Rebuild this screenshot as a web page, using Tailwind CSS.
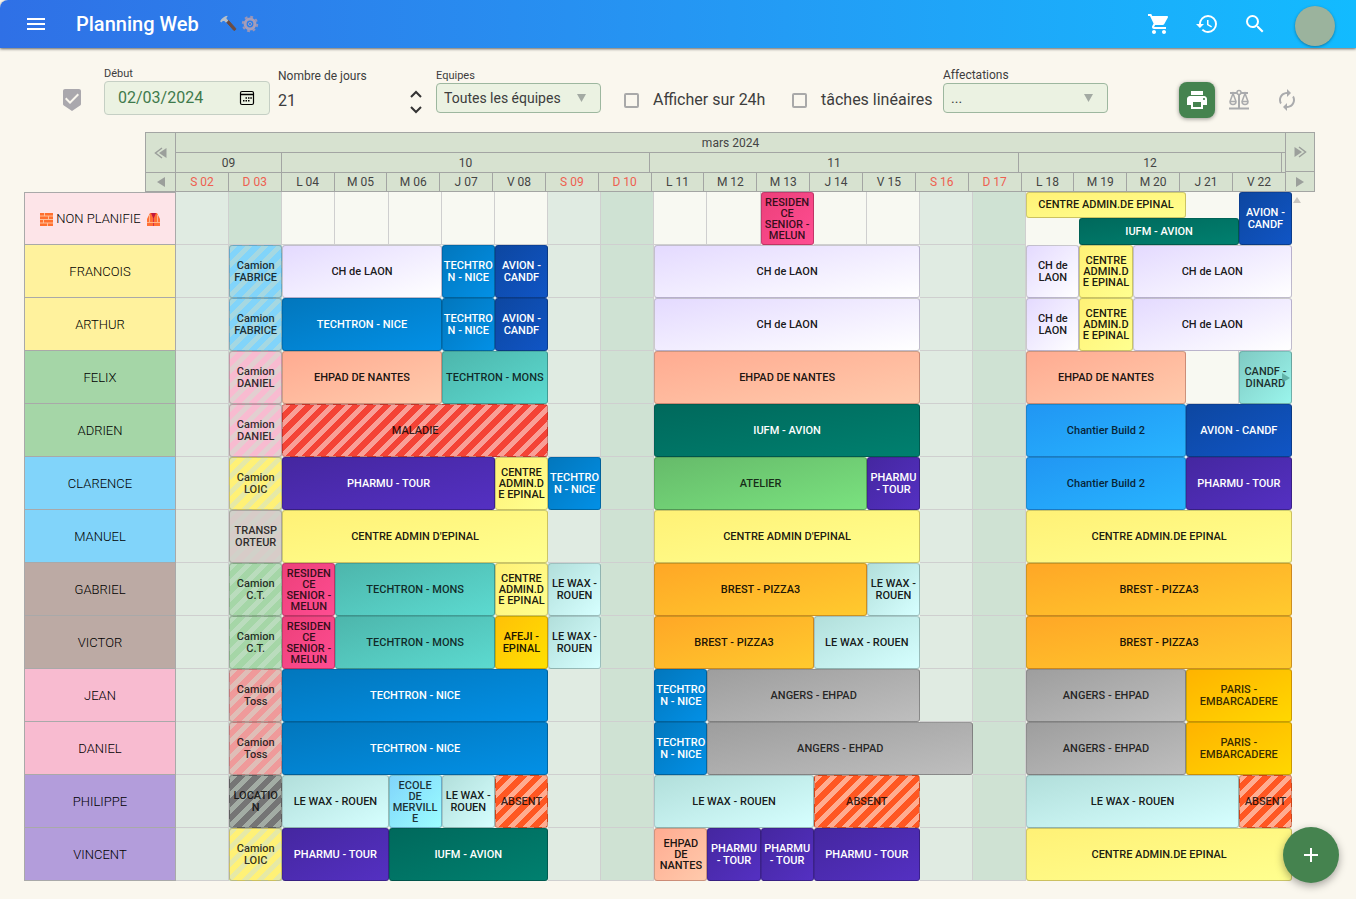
<!DOCTYPE html>
<html lang="fr">
<head>
<meta charset="utf-8">
<meta name="viewport" content="width=device-width, initial-scale=1">
<title>Planning Web</title>
<script src="https://cdn.jsdelivr.net/npm/@tailwindcss/browser@4"></script>
</head>
<body class="min-h-screen bg-[#faf7ee] font-['Roboto','Liberation_Sans',sans-serif] text-[#3d3d3d]">

<header class="flex h-12 items-center rounded-tl-lg bg-linear-to-r from-[#2f70e6] to-[#12bbff] pr-[21px] pl-6 text-white shadow-[0_1px_3px_rgba(0,0,0,0.6)]">
  <button type="button" aria-label="Menu" class="size-6"><svg viewBox="0 0 24 24" class="size-6" fill="currentColor"><path d="M3 18h18v-2H3v2zm0-5h18v-2H3v2zm0-7v2h18V6H3z"/></svg></button>
  <h1 class="ml-7 text-xl font-medium">Planning Web</h1>
  <svg viewBox="0 0 18 18" class="ml-5 size-[18px]"><path d="M7 6.500 9 5l7.600 8.400c.7.9-.9 2.600-1.900 1.800z" fill="#6d4c41" stroke="#6d4c41"/><path d="M1 6.200C3 3 5.500 1.300 8.300.8L8.600 1.400C7.600 2.200 7.200 3 7.800 4L9.400 5.400 7 7.700 5.300 5.900C4 5.800 3.200 6.200 2.500 7.400Z" fill="#b6bfc9"/></svg>
  <svg viewBox="0 0 18 18" class="ml-1 size-[18px]"><circle cx="9" cy="9" r="7.200" fill="none" stroke="#9c95b5" stroke-width="2" stroke-dasharray="2.830 2.830"/><circle cx="9" cy="9" r="4.900" fill="none" stroke="#a59db9" stroke-width="3"/><circle cx="9" cy="9" r="1.600" fill="none" stroke="#a59db9" stroke-width="1"/></svg>
  <div class="ml-auto flex items-center">
    <button type="button" aria-label="Panier" class="mr-6 size-6"><svg viewBox="0 0 24 24" class="size-6" fill="currentColor"><path d="M7 18c-1.100 0-1.990.9-1.990 2S5.900 22 7 22s2-.9 2-2-.9-2-2-2zM1 2v2h2l3.600 7.590-1.350 2.450c-.16.28-.25.61-.25.96 0 1.100.9 2 2 2h12v-2H7.420c-.14 0-.25-.11-.25-.25l.03-.12.9-1.630h7.450c.75 0 1.410-.41 1.750-1.030l3.580-6.490c.08-.14.12-.31.12-.48 0-.55-.45-1-1-1H5.210l-.94-2H1zm16 16c-1.100 0-1.990.9-1.990 2s.89 2 1.990 2 2-.9 2-2-.9-2-2-2z"/></svg></button>
    <button type="button" aria-label="Historique" class="mr-6 size-6"><svg viewBox="0 0 24 24" class="size-6" fill="currentColor"><path d="M13 3a9 9 0 0 0-9 9H1l3.890 3.890.07.14L9 12H6c0-3.870 3.130-7 7-7s7 3.130 7 7-3.130 7-7 7c-1.930 0-3.680-.79-4.940-2.060l-1.420 1.420A8.954 8.954 0 0 0 13 21a9 9 0 0 0 0-18zm-1 5v5l4.280 2.540.72-1.210-3.500-2.080V8H12z"/></svg></button>
    <button type="button" aria-label="Rechercher" class="mr-7 size-6"><svg viewBox="0 0 24 24" class="size-6" fill="currentColor"><path d="M15.500 14h-.79l-.28-.27A6.471 6.471 0 0 0 16 9.500 6.500 6.500 0 1 0 9.500 16c1.610 0 3.090-.59 4.230-1.570l.27.28v.79l5 4.990L20.490 19l-4.990-5zm-6 0C7.010 14 5 11.990 5 9.500S7.010 5 9.500 5 14 7.010 14 9.500 11.990 14 9.500 14z"/></svg></button>
    <button type="button" aria-label="Compte" class="mt-1 size-10 rounded-full bg-[#9bb39d] shadow-[0_1px_3px_rgba(0,0,0,0.35)]"></button>
  </div>
</header>

<main>
  <form class="flex h-[84px] items-start pr-[57px] pl-[60px]">
    <svg viewBox="0 0 24 24" class="mt-10 size-6 shrink-0 text-[#aaa8ad]" fill="currentColor"><path d="M19 1H5c-1.100 0-1.990.9-1.990 2L3 15.930c0 .69.35 1.300.88 1.660L12 23l8.110-5.410c.53-.36.88-.97.88-1.660L21 3c0-1.100-.9-2-2-2zm-9 15-5-5 1.410-1.410L10 13.170l7.590-7.590L19 7l-9 9z"/></svg>
    <div class="mt-[18px] ml-5 w-[166px] shrink-0">
      <label for="debut" class="block h-[15px] text-[11px] leading-[15px]">Début</label>
      <div class="flex h-[34px] items-center rounded border border-[#c5cfc4] bg-[#ebf2e2] pr-[14px] pl-[13px]">
        <input id="debut" type="text" value="02/03/2024" class="w-0 flex-1 bg-transparent text-base text-[#3f7a4c] outline-none">
        <button type="button" aria-label="Choisir une date" class="size-4 text-black"><svg viewBox="0 0 16 16" class="size-4" fill="none" stroke="currentColor"><rect x="1.500" y="1.500" width="13" height="13" rx="1.500" stroke-width="1.200"/><path d="M1.500 4.500h13" stroke-width="1.500"/><path d="M6.500 8h1.500M9 8h1.500M11.300 8h1.500M4 10.800h1.500M6.500 10.800h1.500M9 10.800h1.500" stroke-width="1.500"/></svg></button>
      </div>
    </div>
    <div class="mt-5 ml-2 w-[150px] shrink-0">
      <label for="jours" class="block h-4 text-xs leading-4">Nombre de jours</label>
      <div class="flex h-8 items-center">
        <input id="jours" type="text" inputmode="numeric" value="21" class="mt-px w-0 flex-1 bg-transparent text-base outline-none">
        <div class="mt-1 flex flex-col pr-[6px] text-[#333]">
          <button type="button" aria-label="Augmenter" class="flex h-4 w-3 items-center justify-center"><svg viewBox="0 0 12 8" class="h-2 w-3" fill="none" stroke="currentColor" stroke-width="2"><path d="M1 7l5-5 5 5"/></svg></button>
          <button type="button" aria-label="Diminuer" class="flex h-4 w-3 items-center justify-center"><svg viewBox="0 0 12 8" class="h-2 w-3" fill="none" stroke="currentColor" stroke-width="2"><path d="M1 1l5 5 5-5"/></svg></button>
        </div>
      </div>
    </div>
    <div class="mt-5 ml-2 w-[165px] shrink-0">
      <label for="equipes" class="block h-[15px] text-[11px] leading-[15px]">Equipes</label>
      <div class="relative">
        <select id="equipes" class="h-[30px] w-full appearance-none rounded border border-[#9db79f] bg-[#ebf2e2] pl-[7px] text-sm outline-none"><option>Toutes les équipes</option></select>
        <svg viewBox="0 0 9 8" class="pointer-events-none absolute top-[11px] right-[15px] h-2 w-[9px]" fill="#a3aaa3"><path d="M0 0h9L4.500 8z"/></svg>
      </div>
    </div>
    <label class="mt-10 ml-[23px] flex h-6 w-[145px] shrink-0 items-center text-base"><input type="checkbox" class="size-[15px] appearance-none rounded-[2px] border-2 border-[#a9a9a9]"><span class="ml-[14px]">Afficher sur 24h</span></label>
    <label class="mt-10 ml-[23px] flex h-6 w-[143px] shrink-0 items-center text-base"><input type="checkbox" class="size-[15px] appearance-none rounded-[2px] border-2 border-[#a9a9a9]"><span class="ml-[14px]">tâches linéaires</span></label>
    <div class="mt-5 ml-2 w-[165px] shrink-0">
      <label for="affectations" class="block h-[15px] text-xs leading-[15px]">Affectations</label>
      <div class="relative">
        <select id="affectations" class="h-[30px] w-full appearance-none rounded border border-[#9db79f] bg-[#ebf2e2] pl-[7px] text-sm outline-none"><option>...</option></select>
        <svg viewBox="0 0 9 8" class="pointer-events-none absolute top-[11px] right-[15px] h-2 w-[9px]" fill="#a3aaa3"><path d="M0 0h9L4.500 8z"/></svg>
      </div>
    </div>
    <div class="mt-[34px] ml-auto flex items-center text-[#aaabad]">
      <button type="button" aria-label="Imprimer" class="flex size-9 items-center justify-center rounded-lg bg-[#45834f] text-white shadow-[0_1px_4px_rgba(0,0,0,0.4)]"><svg viewBox="0 0 24 24" class="size-6" fill="currentColor"><path d="M19 8H5c-1.660 0-3 1.340-3 3v6h4v4h12v-4h4v-6c0-1.660-1.340-3-3-3zm-3 11H8v-5h8v5zm3-7c-.55 0-1-.45-1-1s.45-1 1-1 1 .45 1 1-.45 1-1 1zm-1-9H6v4h12V3z"/></svg></button>
      <button type="button" aria-label="Équilibrer" class="ml-3 size-6"><svg viewBox="0 0 24 24" class="size-6" fill="none" stroke="currentColor" stroke-width="2"><path d="M3 5h7M14 5h7M12 7v13M2 20.500h20"/><circle cx="12" cy="4.500" r="2" stroke-width="1.500"/><path d="M6 5.500 3 13.500a3 3 0 0 0 6 0zM18 5.500l-3 8a3 3 0 0 0 6 0zM3 13.500h6M15 13.500h6" stroke-width="1.500"/></svg></button>
      <button type="button" aria-label="Actualiser" class="ml-6 size-6"><svg viewBox="0 0 24 24" class="size-6" fill="currentColor"><path d="M12 6v3l4-4-4-4v3c-4.420 0-8 3.580-8 8 0 1.570.46 3.030 1.240 4.260L6.700 14.800A5.870 5.870 0 0 1 6 12c0-3.310 2.690-6 6-6zm6.760 1.740L17.300 9.200c.44.84.7 1.790.7 2.800 0 3.310-2.690 6-6 6v-3l-4 4 4 4v-3c4.420 0 8-3.580 8-8 0-1.570-.46-3.030-1.240-4.260z"/></svg></button>
    </div>
  </form>

  <section class="flex pr-[41px] pl-[145px] text-xs text-[#444]" aria-label="Calendrier">
    <div class="flex h-[60px] w-[31px] shrink-0 flex-col border border-[#a3a5a3] bg-[#d7e2d0] text-[#9b9f9b]">
      <button type="button" aria-label="Reculer d'une semaine" class="flex h-10 items-center justify-center border-b border-[#a3a5a3]"><svg viewBox="0 0 13 12" class="h-3 w-[13px]"><path d="M12.500 1v10L5 6z" fill="currentColor"/><path d="M8 1 1.500 6 8 11" fill="none" stroke="currentColor" stroke-width="1.500"/></svg></button>
      <button type="button" aria-label="Reculer d'un jour" class="flex flex-1 items-center justify-center"><svg viewBox="0 0 8 10" class="h-[10px] w-2"><path d="M8 0v10L0 5z" fill="currentColor"/></svg></button>
    </div>
    <div class="min-w-0 flex-1">
      <table class="h-[60px] w-full table-fixed border-separate border-spacing-0 border-y border-[#a3a5a3] bg-[#d7e2d0] text-center">
        <thead id="calendar"></thead>
      </table>
    </div>
    <div class="flex h-[60px] w-[29px] shrink-0 flex-col border border-l-0 border-[#a3a5a3] bg-[#d7e2d0] text-[#9b9f9b]">
      <button type="button" aria-label="Avancer d'une semaine" class="flex h-[39px] items-center justify-center border-b border-[#a3a5a3]"><svg viewBox="0 0 13 12" class="h-3 w-[13px]"><path d="M.5 1v10L8 6z" fill="currentColor"/><path d="M5 1l6.500 5L5 11" fill="none" stroke="currentColor" stroke-width="1.500"/></svg></button>
      <button type="button" aria-label="Avancer d'un jour" class="flex flex-1 items-center justify-center"><svg viewBox="0 0 8 10" class="h-[10px] w-2"><path d="M0 0v10l8-5z" fill="currentColor"/></svg></button>
    </div>
  </section>

  <section class="flex items-start pl-6" aria-label="Planning des équipes">
    <div class="min-w-0 flex-1">
      <table class="w-full table-fixed border-separate border-spacing-0">
        <colgroup id="columns"><col class="w-[152px]"></colgroup>
        <tbody id="planning"></tbody>
      </table>
    </div>
    <svg viewBox="0 0 8 6" class="mt-[5px] mr-[55px] ml-px h-[6px] w-2 shrink-0" fill="#c9c6c0"><path d="M4 0l4 6H0z"/></svg>
  </section>
</main>

<button type="button" aria-label="Ajouter" class="fixed right-[17px] bottom-4 flex size-14 items-center justify-center rounded-full bg-[#45834f] text-white shadow-[0_3px_8px_rgba(0,0,0,0.35)]"><svg viewBox="0 0 24 24" class="size-6" fill="currentColor"><path d="M19 13h-6v6h-2v-6H5v-2h6V5h2v6h6v2z"/></svg></button>

<script>
  const days = ['S 02','D 03','L 04','M 05','M 06','J 07','V 08','S 09','D 10','L 11','M 12','M 13','J 14','V 15','S 16','D 17','L 18','M 19','M 20','J 21','V 22'];
  document.getElementById('columns').insertAdjacentHTML('beforeend', '<col>'.repeat(days.length));
  document.getElementById('calendar').innerHTML = `
    <tr><th colspan="21" class="h-5 border-r border-b border-[#a3a5a3] p-0 font-normal">mars 2024</th></tr>
    <tr><th colspan="21" class="h-5 border-r border-b border-[#a3a5a3] p-0 font-normal">
      <div class="grid h-[19px] grid-cols-[106fr_368fr_369fr_263fr_3fr] leading-[20px]">
        <span class="border-r border-[#a3a5a3]">09</span><span class="border-r border-[#a3a5a3]">10</span><span class="border-r border-[#a3a5a3]">11</span><span class="border-r border-[#a3a5a3]">12</span><span></span>
      </div></th></tr>
    <tr>${days.map(d => `<th class="h-[18px] border-r border-[#a3a5a3] p-0 font-normal ${/^[SD]/.test(d) ? 'text-[#ee5f50]' : ''}">${d}</th>`).join('')}</tr>`;

  const styles = {
    lilac:  'bg-linear-to-br from-[#e4daff] to-[#ffffff] text-black/90',
    blue:   'bg-linear-to-br from-[#0277bd] to-[#0290e6] text-white',
    navy:   'bg-linear-to-br from-[#0d47a1] to-[#1055c5] text-white',
    peach:  'bg-linear-to-br from-[#ffab91] to-[#ffcaac] text-black/90',
    mons:   'bg-linear-to-br from-[#4db6ac] to-[#5cdad0] text-black/80',
    pine:   'bg-linear-to-br from-[#00695c] to-[#00806f] text-white',
    violet: 'bg-linear-to-br from-[#4527a0] to-[#5430c2] text-white',
    yellow: 'bg-linear-to-br from-[#fff176] to-[#ffff8f] text-black/90',
    pink:   'bg-linear-to-br from-[#ec407a] to-[#ff4d92] text-black/80',
    wax:    'bg-linear-to-br from-[#b2dfdb] to-[#d6ffff] text-black/90',
    sky:    'bg-linear-to-br from-[#81d4fa] to-[#9bfeff] text-black/80',
    candf:  'bg-linear-to-br from-[#80cbc4] to-[#9af5ec] text-black/80',
    green:  'bg-linear-to-br from-[#66bb6a] to-[#7ae27f] text-black/80',
    orange: 'bg-linear-to-br from-[#ffa726] to-[#ffca2e] text-black/90',
    afeji:  'bg-linear-to-br from-[#ffc107] to-[#ffe000] text-black/90',
    amber:  'bg-linear-to-br from-[#ffb300] to-[#ffd700] text-black/80',
    azure:  'bg-linear-to-br from-[#2196f3] to-[#28b4ff] text-black/80',
    grey:   'bg-linear-to-br from-[#9e9e9e] to-[#bebebe] text-black/80',
    sSky:   'bg-[repeating-linear-gradient(135deg,#a5d8e2_0_5px,#81d4fa_5px_11px)] text-black/80',
    sPink:  'bg-[repeating-linear-gradient(135deg,#e2cfd0_0_5px,#f8bbd0_5px_11px)] text-black/80',
    sYellow:'bg-[repeating-linear-gradient(135deg,#e6e9a6_0_5px,#fff176_5px_11px)] text-black/80',
    sTaupe: 'bg-[repeating-linear-gradient(135deg,#d1d1c9_0_5px,#d7ccc8_5px_11px)] text-black/80',
    sGreen: 'bg-[repeating-linear-gradient(135deg,#badcbd_0_5px,#a5d6a7_5px_11px)] text-black/80',
    sRose:  'bg-[repeating-linear-gradient(135deg,#dfbeb7_0_5px,#ef9a9a_5px_11px)] text-black/80',
    sGrey:  'bg-[repeating-linear-gradient(135deg,#a3aca4_0_5px,#757575_5px_11px)] text-black/80',
    sRed:   'bg-[repeating-linear-gradient(135deg,#f99f97_0_5px,#f44336_5px_11px)] text-black/80',
    sOrange:'bg-[repeating-linear-gradient(135deg,#ffac90_0_5px,#ff5722_5px_11px)] text-black/80',
  };
  const wall = '<svg viewBox="0 0 13 13" class="mr-[3px] inline size-[13px]"><rect width="13" height="13" rx="1" fill="#ffc09a"/><path d="M0 0h4v2.500H0zM5 0h8v2.500H5zM0 3.500h8v2.500H0zM9 3.500h4v2.500H9zM0 7h3v2.500H0zM4 7h9v2.500H4zM0 10.500h7V13H0zM8 10.500h5V13H8z" fill="#ff6f2e"/></svg>';
  const vest = '<svg viewBox="0 0 13 13" class="ml-[6px] inline size-[13px]"><path d="M3 0h7l3 6v7H0V6z" fill="#ff7035"/><path d="M4 0h5L6.500 6z" fill="#c2183c"/><path d="M6 5h1v8H6z" fill="#d6304a"/><path d="M2.500 2v7M10.500 2v7" stroke="#ffb38a"/><path d="M0 9.500h13" stroke="#ffb38a"/></svg>';
  const gap = n => Array(n).fill([1]);
  const rows = [
    [wall + 'NON PLANIFIE' + vest, 'bg-[#fde4e8]', [...gap(11), [1,'pink','RESIDEN\nCE\nSENIOR -\nMELUN'], ...gap(4), [5,'stack']]],
    ['FRANCOIS','bg-[#fff29d]',[[1],[1,'sSky','Camion\nFABRICE'],[3,'lilac','CH de LAON'],[1,'blue','TECHTRO\nN - NICE'],[1,'navy','AVION -\nCANDF'],[1],[1],[5,'lilac','CH de LAON'],[1],[1],[1,'lilac','CH de\nLAON'],[1,'yellow','CENTRE\nADMIN.D\nE EPINAL'],[3,'lilac','CH de LAON']]],
    ['ARTHUR','bg-[#fff29d]',[[1],[1,'sSky','Camion\nFABRICE'],[3,'blue','TECHTRON - NICE'],[1,'blue','TECHTRO\nN - NICE'],[1,'navy','AVION -\nCANDF'],[1],[1],[5,'lilac','CH de LAON'],[1],[1],[1,'lilac','CH de\nLAON'],[1,'yellow','CENTRE\nADMIN.D\nE EPINAL'],[3,'lilac','CH de LAON']]],
    ['FELIX','bg-[#a5d6a7]',[[1],[1,'sPink','Camion\nDANIEL'],[3,'peach','EHPAD DE NANTES'],[2,'mons','TECHTRON - MONS'],[1],[1],[5,'peach','EHPAD DE NANTES'],[1],[1],[3,'peach','EHPAD DE NANTES'],[1],[1,'candf','CANDF -\nDINARD']]],
    ['ADRIEN','bg-[#a5d6a7]',[[1],[1,'sPink','Camion\nDANIEL'],[5,'sRed','MALADIE'],[1],[1],[5,'pine','IUFM - AVION'],[1],[1],[3,'azure','Chantier Build 2'],[2,'navy','AVION - CANDF']]],
    ['CLARENCE','bg-[#81d4fa]',[[1],[1,'sYellow','Camion\nLOIC'],[4,'violet','PHARMU - TOUR'],[1,'yellow','CENTRE\nADMIN.D\nE EPINAL'],[1,'blue','TECHTRO\nN - NICE'],[1],[4,'green','ATELIER'],[1,'violet','PHARMU\n- TOUR'],[1],[1],[3,'azure','Chantier Build 2'],[2,'violet','PHARMU - TOUR']]],
    ['MANUEL','bg-[#81d4fa]',[[1],[1,'sTaupe','TRANSP\nORTEUR'],[5,'yellow',"CENTRE ADMIN D'EPINAL"],[1],[1],[5,'yellow',"CENTRE ADMIN D'EPINAL"],[1],[1],[5,'yellow','CENTRE ADMIN.DE EPINAL']]],
    ['GABRIEL','bg-[#bcaaa4]',[[1],[1,'sGreen','Camion\nC.T.'],[1,'pink','RESIDEN\nCE\nSENIOR -\nMELUN'],[3,'mons','TECHTRON - MONS'],[1,'yellow','CENTRE\nADMIN.D\nE EPINAL'],[1,'wax','LE WAX -\nROUEN'],[1],[4,'orange','BREST - PIZZA3'],[1,'wax','LE WAX -\nROUEN'],[1],[1],[5,'orange','BREST - PIZZA3']]],
    ['VICTOR','bg-[#bcaaa4]',[[1],[1,'sGreen','Camion\nC.T.'],[1,'pink','RESIDEN\nCE\nSENIOR -\nMELUN'],[3,'mons','TECHTRON - MONS'],[1,'afeji','AFEJI -\nEPINAL'],[1,'wax','LE WAX -\nROUEN'],[1],[3,'orange','BREST - PIZZA3'],[2,'wax','LE WAX - ROUEN'],[1],[1],[5,'orange','BREST - PIZZA3']]],
    ['JEAN','bg-[#f8bbd0]',[[1],[1,'sRose','Camion\nToss'],[5,'blue','TECHTRON - NICE'],[1],[1],[1,'blue','TECHTRO\nN - NICE'],[4,'grey','ANGERS - EHPAD'],[1],[1],[3,'grey','ANGERS - EHPAD'],[2,'amber','PARIS -\nEMBARCADERE']]],
    ['DANIEL','bg-[#f8bbd0]',[[1],[1,'sRose','Camion\nToss'],[5,'blue','TECHTRON - NICE'],[1],[1],[1,'blue','TECHTRO\nN - NICE'],[5,'grey','ANGERS - EHPAD'],[1],[3,'grey','ANGERS - EHPAD'],[2,'amber','PARIS -\nEMBARCADERE']]],
    ['PHILIPPE','bg-[#b39ddb]',[[1],[1,'sGrey','LOCATIO\nN'],[2,'wax','LE WAX - ROUEN'],[1,'sky','ECOLE\nDE\nMERVILL\nE'],[1,'wax','LE WAX -\nROUEN'],[1,'sOrange','ABSENT'],[1],[1],[3,'wax','LE WAX - ROUEN'],[2,'sOrange','ABSENT'],[1],[1],[4,'wax','LE WAX - ROUEN'],[1,'sOrange','ABSENT']]],
    ['VINCENT','bg-[#b39ddb]',[[1],[1,'sYellow','Camion\nLOIC'],[2,'violet','PHARMU - TOUR'],[3,'pine','IUFM - AVION'],[1],[1],[1,'peach','EHPAD\nDE\nNANTES'],[1,'violet','PHARMU\n- TOUR'],[1,'violet','PHARMU\n- TOUR'],[2,'violet','PHARMU - TOUR'],[1],[1],[5,'yellow','CENTRE ADMIN.DE EPINAL']]],
  ];

  const task = (style, text, extra) => {
    const leading = text.split('\n').length > 2 ? 'leading-[11px]' : 'leading-[12px]';
    return `<div class="relative flex items-center justify-center rounded-[3px] border border-black/20 text-center text-[11px] font-medium whitespace-pre ${leading} ${extra} ${styles[style]}">${text}${style === 'candf' ? '<svg viewBox="0 0 8 10" class="absolute right-px h-[10px] w-2" fill="#4f9d92" fill-opacity="0.7"><path d="M0 0v10l8-5z"/></svg>' : ''}</div>`;
  };
  const stack = `<div class="grid h-[53px] grid-cols-5 grid-rows-[26px_27px]">
    ${task('yellow', 'CENTRE ADMIN.DE EPINAL', 'col-span-3')}
    ${task('navy', 'AVION -\nCANDF', 'col-start-5 row-span-2')}
    ${task('pine', 'IUFM - AVION', 'col-span-3 col-start-2 row-start-2')}
  </div>`;

  document.getElementById('planning').innerHTML = rows.map(([name, tint, cells], r) => {
    let day = 0;
    const tds = cells.map(([span, style, text]) => {
      const kind = days[day][0];
      const shade = kind === 'S' ? 'bg-[#e0ebe2]' : kind === 'D' ? 'bg-[#cfe2d3]' : 'bg-[#f8f9f2]';
      day += span;
      if (!style) return `<td class="border-r border-b border-[#cfcfcf] p-0 ${shade}"></td>`;
      return `<td colspan="${span}" class="p-0 ${shade}">${style === 'stack' ? stack : task(style, text, 'h-[53px]')}</td>`;
    }).join('');
    return `<tr class="h-[53px]"><th scope="row" class="border-x border-b border-[#a9a9a9] px-0 pt-px pb-0 text-[13px] font-light text-black ${r ? '' : 'border-t'} ${tint}">${name}</th>${tds}</tr>`;
  }).join('');
</script>
</body>
</html>
